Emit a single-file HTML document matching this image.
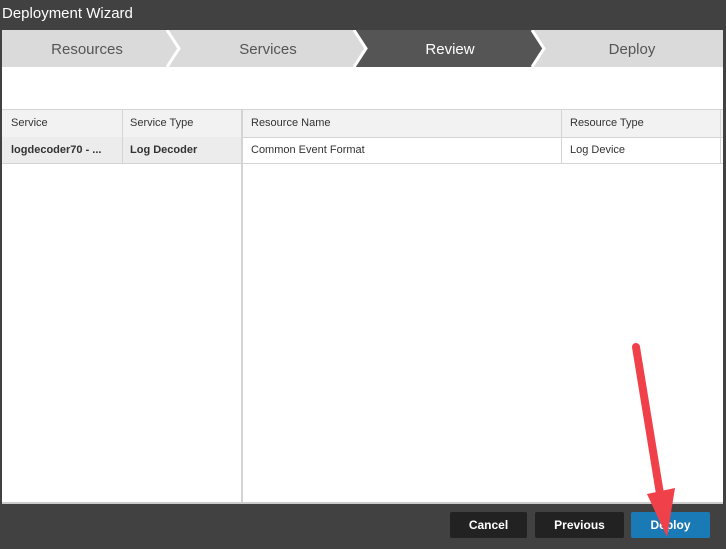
<!DOCTYPE html>
<html><head><style>
body{margin:0;width:726px;height:549px;background:#414141;font-family:"Liberation Sans",sans-serif;position:relative;overflow:hidden}
.title{position:absolute;left:2px;top:5px;color:#fff;font-size:15px}
.body{position:absolute;left:2px;top:67px;width:721px;height:435px;background:#fff;border-bottom:2px solid #ccc}
.t{position:absolute;font-size:11px;color:#333}
.btn{position:absolute;top:512px;height:26px;color:#fff;font-weight:bold;font-size:12px;text-align:center;line-height:26px;background:#222;border-radius:2px}
</style></head><body>
<div class="title">Deployment Wizard</div>
<svg width="721" height="37" style="position:absolute;left:2px;top:30px">
<rect width="721" height="37" fill="#dadada"/>
<polygon points="352,0 530,0 542,18.5 530,37 352,37 364,18.5" fill="#555"/>
<polyline points="165,0 177,18.5 165,37" fill="none" stroke="#fff" stroke-width="3"/>
<polyline points="352,0 364,18.5 352,37" fill="none" stroke="#fff" stroke-width="3"/>
<polyline points="530,0 542,18.5 530,37" fill="none" stroke="#fff" stroke-width="3"/>
<text x="85" y="24" font-size="15" fill="#555" text-anchor="middle" font-family="Liberation Sans">Resources</text>
<text x="266" y="24" font-size="15" fill="#555" text-anchor="middle" font-family="Liberation Sans">Services</text>
<text x="448" y="24" font-size="15" fill="#fff" text-anchor="middle" font-family="Liberation Sans">Review</text>
<text x="630" y="24" font-size="15" fill="#555" text-anchor="middle" font-family="Liberation Sans">Deploy</text>
</svg>
<div class="body">
<div style="position:absolute;left:0;top:42px;width:721px;height:27px;background:#f2f2f2;border-top:1px solid #d4d4d4;border-bottom:1px solid #d4d4d4"></div>
<div style="position:absolute;left:0;top:70px;width:239px;height:26px;background:#ececec;border-bottom:1px solid #d4d4d4"></div>
<div style="position:absolute;left:241px;top:70px;width:480px;height:26px;border-bottom:1px solid #d4d4d4"></div>
<div style="position:absolute;left:239px;top:42px;width:2px;height:393px;background:#d4d4d4"></div>
<div style="position:absolute;left:120px;top:42px;width:1px;height:54px;background:#d4d4d4"></div>
<div style="position:absolute;left:559px;top:42px;width:1px;height:54px;background:#d4d4d4"></div>
<div style="position:absolute;left:718px;top:42px;width:1px;height:54px;background:#d4d4d4"></div>
<div class="t" style="left:9px;top:50px">Service</div>
<div class="t" style="left:128px;top:50px">Service Type</div>
<div class="t" style="left:249px;top:50px">Resource Name</div>
<div class="t" style="left:568px;top:50px">Resource Type</div>
<div class="t" style="left:9px;top:77px;font-weight:bold">logdecoder70 - ...</div>
<div class="t" style="left:128px;top:77px;font-weight:bold">Log Decoder</div>
<div class="t" style="left:249px;top:77px">Common Event Format</div>
<div class="t" style="left:568px;top:77px">Log Device</div>
</div>
<div class="btn" style="left:450px;width:77px">Cancel</div>
<div class="btn" style="left:535px;width:89px">Previous</div>
<div class="btn" style="left:631px;width:79px;background:#1a7ab5">Deploy</div>
<svg width="726" height="549" style="position:absolute;left:0;top:0">
<line x1="636" y1="347" x2="661" y2="500" stroke="#f0414a" stroke-width="8" stroke-linecap="round"/>
<polygon points="647,494 675,488 667,537" fill="#f0414a"/>
</svg>
</body></html>
